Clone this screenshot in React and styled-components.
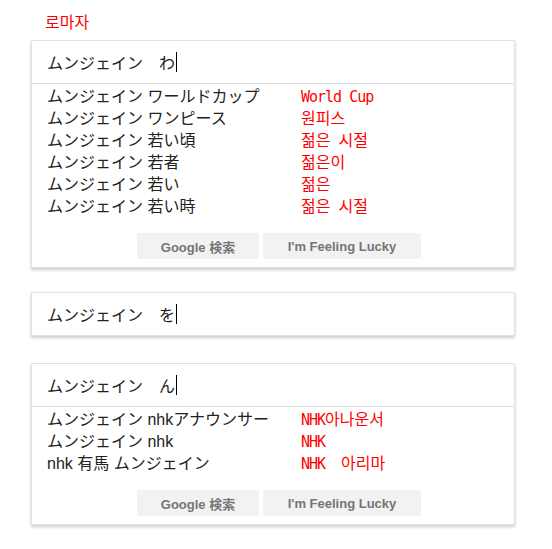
import React from "react";
import styled, { createGlobalStyle } from "styled-components";

const GlobalStyle = createGlobalStyle`
  body {
    margin: 0;
    background: #fff;
    font-family: "Liberation Sans", "Noto Sans CJK JP", sans-serif;
  }
`;

const Page = styled.div`
  display: flex;
  flex-direction: column;
  padding: 11px 0 12px 31px;
  width: 484px;
`;

const Label = styled.div`
  margin-left: 14px;
  font-family: "Noto Sans CJK KR", sans-serif;
  font-size: 16px;
  line-height: 20px;
  color: #ff0000;
`;

const Card = styled.div`
  margin-top: ${(p) => p.$top}px;
  background: #fff;
  border: 1px solid #e2e2e2;
  box-shadow: 0 2px 3px rgba(0, 0, 0, 0.2);
  display: flex;
  flex-direction: column;
`;

const InputRow = styled.div`
  height: 42px;
  display: flex;
  align-items: center;
  padding-left: 15px;
  font-size: 16px;
  color: #222;
  border-bottom: ${(p) => (p.$divider ? "1px solid #dedede" : "none")};
`;

const Caret = styled.span`
  display: inline-block;
  width: 1px;
  height: 20px;
  margin-left: 1px;
  background: #000;
`;

const List = styled.div`
  display: flex;
  flex-direction: column;
  padding-left: 15px;
`;

const Row = styled.div`
  display: flex;
  height: 22px;
  align-items: center;
  font-size: 16px;
  color: #222;
`;

const Term = styled.span`
  width: 254px;
  flex-shrink: 0;
  white-space: nowrap;
`;

const Red = styled.span`
  font-family: "Noto Sans CJK KR", sans-serif;
  font-size: 16px;
  color: #ff0000;
  white-space: pre;
  word-spacing: 4.4px;
`;

const Mono = styled.span`
  font-family: "DejaVu Sans Mono", monospace;
  font-size: 15px;
  letter-spacing: -1px;
  word-spacing: 0;
`;

const Buttons = styled.div`
  display: flex;
  justify-content: center;
  gap: 4px;
  padding: 17px 0 8px 12px;
`;

const Button = styled.div`
  height: 26px;
  width: ${(p) => p.$w}px;
  background: #f2f2f2;
  border-radius: 2px;
  display: flex;
  align-items: center;
  justify-content: center;
  font-family: "Liberation Sans", "Noto Sans CJK JP", sans-serif;
  font-size: 13px;
  font-weight: bold;
  color: #757575;
`;

const prefix = "ムンジェイン";

const first = [
  [`${prefix} ワールドカップ`, <Mono>World Cup</Mono>],
  [`${prefix} ワンピース`, "원피스"],
  [`${prefix} 若い頃`, "젊은 시절"],
  [`${prefix} 若者`, "젊은이"],
  [`${prefix} 若い`, "젊은"],
  [`${prefix} 若い時`, "젊은 시절"],
];

const third = [
  [`${prefix} nhkアナウンサー`, <><Mono>NHK</Mono>아나운서</>],
  [`${prefix} nhk`, <Mono>NHK</Mono>],
  [`nhk 有馬 ${prefix}`, <><Mono>NHK</Mono>  아리마</>],
];

function Suggestions({ items }) {
  return (
    <List>
      {items.map(([term, ko], i) => (
        <Row key={i}>
          <Term>{term}</Term>
          <Red>{ko}</Red>
        </Row>
      ))}
    </List>
  );
}

function SearchButtons() {
  return (
    <Buttons>
      <Button $w={122}>Google 検索</Button>
      <Button $w={158}>I'm Feeling Lucky</Button>
    </Buttons>
  );
}

export default function App() {
  return (
    <>
      <GlobalStyle />
      <Page>
        <Label>로마자</Label>
        <Card $top={9}>
          <InputRow $divider>
            {prefix}　わ<Caret />
          </InputRow>
          <Suggestions items={first} />
          <SearchButtons />
        </Card>
        <Card $top={24}>
          <InputRow>
            {prefix}　を<Caret />
          </InputRow>
        </Card>
        <Card $top={27}>
          <InputRow $divider>
            {prefix}　ん<Caret />
          </InputRow>
          <Suggestions items={third} />
          <SearchButtons />
        </Card>
      </Page>
    </>
  );
}
